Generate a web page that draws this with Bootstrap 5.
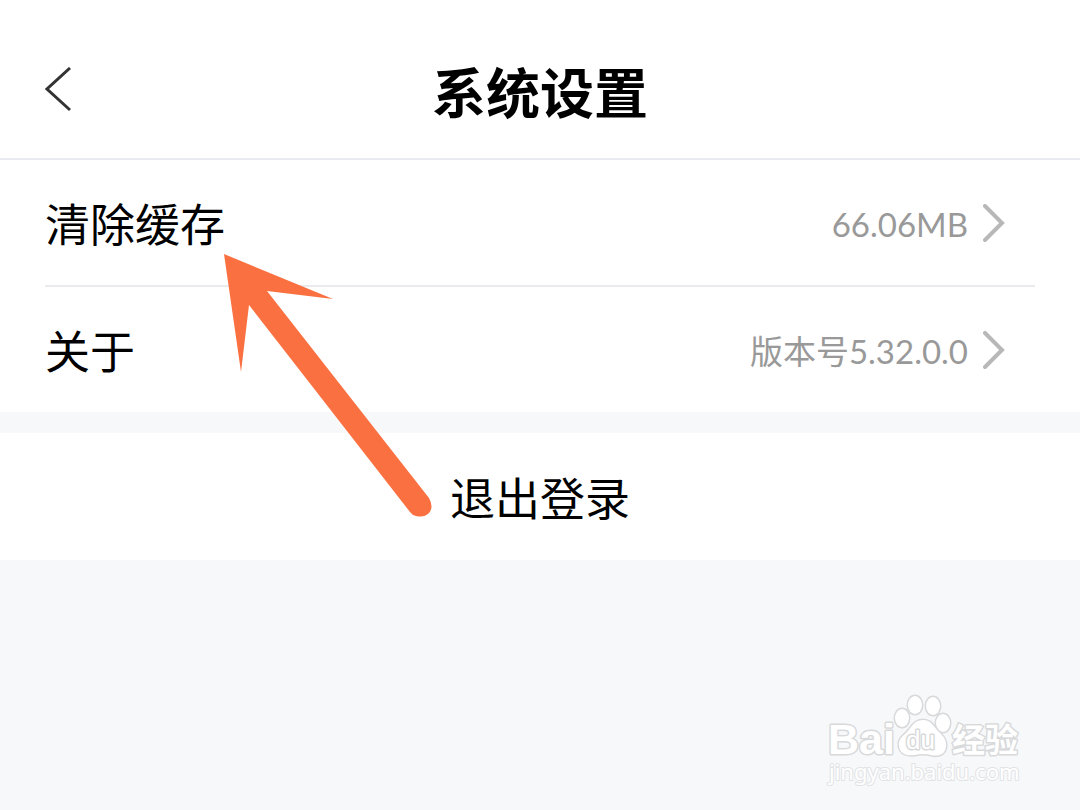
<!DOCTYPE html>
<html lang="zh-CN">
<head>
<meta charset="utf-8">
<meta name="viewport" content="width=device-width, initial-scale=1">
<title>系统设置</title>
<link rel="stylesheet" href="https://cdn.jsdelivr.net/npm/bootstrap@5.3.0/dist/css/bootstrap.min.css">
<style>
  body { background: #f6f8fa; color: #000; font-family: "Noto Sans CJK SC", sans-serif; }
  .screen { min-height: 100vh; }
  .topbar { padding: 24px 45px 0; height: 160px; border-bottom: 2px solid #e9ebf0; }
  .topbar h1 { font-size: 54px; line-height: 64px; }
  .back { width: 26px; height: 48px; }
  .setting-list { padding: 0 45px; }
  .setting { height: 125px; font-size: 45px; line-height: 60px; color: #000; }
  .setting + .setting { border-top: 2px solid #e9ebee; height: 127px; }
  .setting-value { padding-top: 3px; font-family: Lato, "Noto Sans CJK SC", sans-serif; font-size: 33px; color: #999; }
  .chevron { margin: 0 30px 0 15px; }
  .logout { margin-top: 21px; height: 127px; font-size: 45px; line-height: 60px; }
  .pointer { left: 224px; top: 254px; pointer-events: none; }
  .watermark { right: 55px; bottom: 20px; }
  .watermark text, .watermark .paw { fill: #fff; stroke: #d8d9db; stroke-width: 3px; stroke-linejoin: round; paint-order: stroke; }
  .watermark .site { stroke: #e2e3e5; stroke-width: 2px; }
</style>
</head>
<body>
<div class="screen position-relative">
  <header class="topbar bg-white d-flex align-items-center">
    <button type="button" class="back btn p-0 border-0 d-flex" aria-label="返回">
      <svg width="26" height="46" viewBox="0 0 26 46" fill="none" stroke="#333" stroke-width="3"><path d="M25 1 2 22 25 43"/></svg>
    </button>
    <h1 class="flex-fill text-center fw-bold mb-0">系统设置</h1>
    <span class="back"></span>
  </header>

  <main>
    <div class="setting-list bg-white">
      <a href="#cache" class="setting d-flex align-items-center text-decoration-none">
        <span class="me-auto">清除缓存</span>
        <span class="setting-value">66.06MB</span>
        <svg class="chevron" width="22" height="38" viewBox="0 0 22 38" fill="none" stroke="#b8b8b8" stroke-width="4" stroke-linecap="round"><path d="M2 2 19 19 2 36"/></svg>
      </a>
      <a href="#about" class="setting d-flex align-items-center text-decoration-none">
        <span class="me-auto">关于</span>
        <span class="setting-value">版本号5.32.0.0</span>
        <svg class="chevron" width="22" height="38" viewBox="0 0 22 38" fill="none" stroke="#b8b8b8" stroke-width="4" stroke-linecap="round"><path d="M2 2 19 19 2 36"/></svg>
      </a>
    </div>
    <button type="button" class="logout btn bg-white w-100 rounded-0 border-0 p-0 text-black">退出登录</button>
  </main>

  <svg class="pointer position-absolute" width="210" height="266" viewBox="0 0 210 266" fill="#fb7040" aria-hidden="true">
    <path d="M0 0 109 45 43 37 205 244Q210 253 205 259 200 264 192 262 188 261 186 258L25 51 17 118Z"/>
  </svg>

  <svg class="watermark position-absolute" width="200" height="100" viewBox="0 0 200 100" role="img" aria-label="Baidu 经验">
    <text x="3" y="64" font-family="Liberation Sans, sans-serif" font-weight="700" font-size="43">Bai</text>
    <g class="paw">
      <ellipse cx="77" cy="28" rx="7" ry="9"/>
      <ellipse cx="90" cy="15" rx="7" ry="9"/>
      <ellipse cx="108" cy="16" rx="7" ry="9"/>
      <ellipse cx="118" cy="33" rx="7" ry="9"/>
      <path d="M98 30C88 30 86 39 80 44 75 48 73 52 74 57 76 65 83 66 90 65Q98 63 106 65C114 67 120 64 121 57 122 51 119 47 115 43 109 38 107 30 98 30Z"/>
    </g>
    <text x="81" y="59" font-family="Liberation Sans, sans-serif" font-size="26">du</text>
    <text x="127" y="62" font-family="Noto Sans CJK SC, sans-serif" font-weight="700" font-size="33">经验</text>
    <text class="site" x="4" y="90" font-family="Noto Sans, sans-serif" font-size="22">jingyan.baidu.com</text>
  </svg>
</div>
<script src="https://cdn.jsdelivr.net/npm/bootstrap@5.3.0/dist/js/bootstrap.bundle.min.js"></script>
</body>
</html>
